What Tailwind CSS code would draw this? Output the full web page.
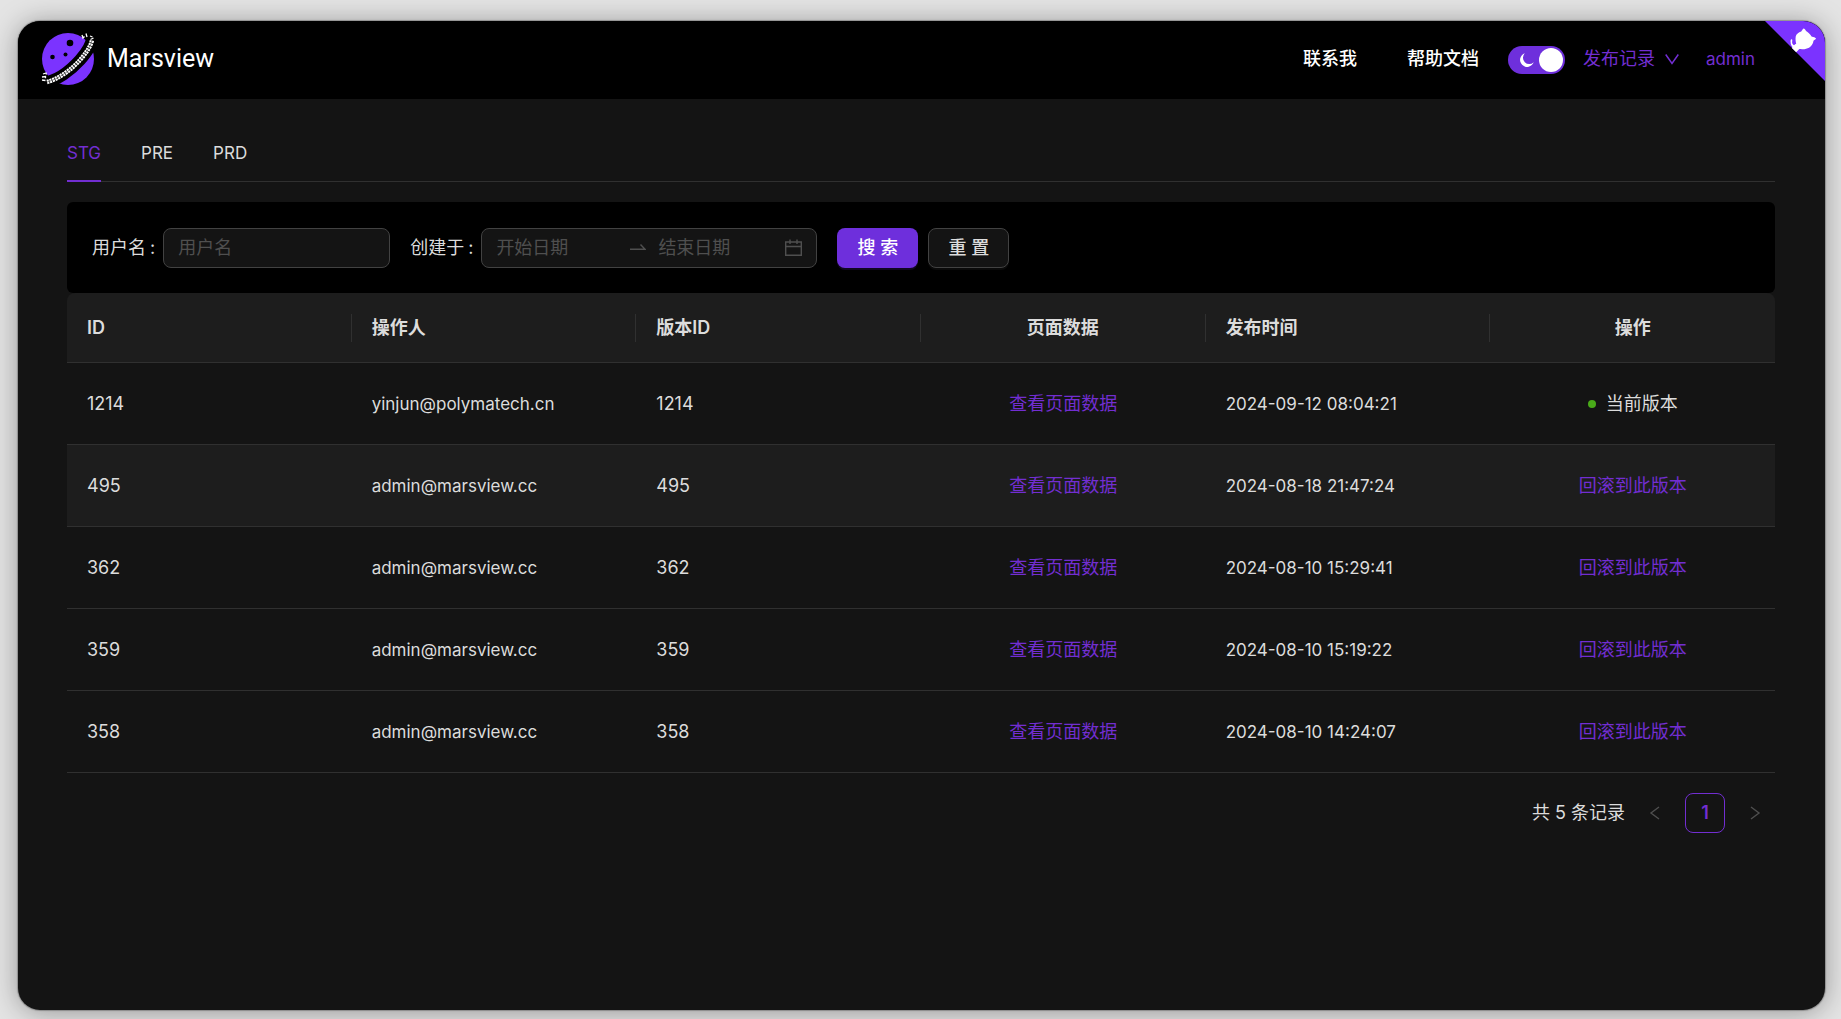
<!DOCTYPE html>
<html lang="zh-CN">
<head>
<meta charset="utf-8">
<meta name="viewport" content="width=device-width, initial-scale=1">
<title>Marsview</title>
<script src="https://cdn.jsdelivr.net/npm/@tailwindcss/browser@4"></script>
</head>
<body class="flex min-h-screen bg-[#e4e4e4] pt-[21px] pr-4 pb-[9px] pl-[18px] font-[Inter,'Noto_Sans_CJK_SC',sans-serif] text-lg leading-7 text-[#dcdcdc]">
<div class="relative flex flex-1 flex-col overflow-hidden rounded-[22px] bg-[#141414] shadow-[0_0_1px_1px_rgba(0,0,0,0.25),0_2px_28px_rgba(0,0,0,0.35)]">

  <header class="flex h-[78px] items-center justify-between bg-black pr-[70px] pb-0.5 pl-[23px]">
    <a href="#" class="flex items-center gap-3 font-[Roboto,sans-serif] text-[25px] text-white">
      <svg class="size-[54px]" viewBox="0 0 54 54" fill="none" aria-hidden="true">
        <circle cx="27" cy="27" r="26" fill="#7b33ff"/>
        <circle cx="29" cy="11" r="3.3" fill="#000"/>
        <circle cx="11.500" cy="25" r="2.300" fill="#000"/>
        <circle cx="24.500" cy="22.500" r="2" fill="#000"/>
        <path d="M2 51C16 49 30 38 39 28C46 20 51 13 51 5" stroke="#000" stroke-width="12"/>
        <path d="M6 50C18 47 31 37 39 28C45 21 50 14 51 8" stroke="#fff" stroke-width="4.400" stroke-dasharray="2.200 0.700"/>
        <path d="M6 50C18 47 31 37 39 28C45 21 50 14 51 8" stroke="#555" stroke-width="0.700"/>
        <path d="M1 48l3.500.5M1 45l3.500-.5 0 1.800M2 42l3-1 .5 1.500M41 3l1 3 1.500-1.500M45 1.500l1 3.500M49 4l2.500 1M52.500 6l-3 1.500" stroke="#fff" stroke-width="1.300"/>
      </svg>
      Marsview
    </a>
    <nav class="flex items-center text-[#722ed1]">
      <a href="#" class="mr-[50px] font-medium text-white">联系我</a>
      <a href="#" class="mr-[29px] font-medium text-white">帮助文档</a>
      <label class="relative mt-0.5 mr-[18px] block h-7 w-[57px]">
        <input type="checkbox" checked aria-label="深色模式" class="block h-7 w-[57px] appearance-none rounded-full bg-[#6e2fdc]">
        <svg class="absolute top-[7px] left-3 size-3.5" viewBox="0 0 14 14" fill="#fff" aria-hidden="true"><path d="M4.800 0.300A7 7 0 1 0 13.700 9.200A5.200 5.200 0 0 1 4.800 0.300z"/></svg>
        <span class="absolute top-[2px] right-[2px] size-6 rounded-full bg-white"></span>
      </label>
      <button type="button" class="mr-[27px] flex items-center gap-2.5">发布记录
        <svg class="size-3.5" viewBox="0 0 14 14" fill="none" stroke="currentColor" stroke-width="1.500" aria-hidden="true"><path d="M.7 2.500L7 11.500L13.300 2.500"/></svg>
      </button>
      <a href="#" class="text-[17px]">admin</a>
    </nav>
    <a href="#" aria-label="GitHub" class="absolute top-0 right-0 size-[60px]">
      <svg class="size-full" viewBox="0 0 250 250" aria-hidden="true">
        <path fill="#7b33ff" d="M0 0L250 250V0z"/>
        <path fill="#fff" d="M122 114c-16-9-15-24-15-24-1-6-1-13 3-14 6-1 3 8 3 14 1 8 6 11 9 12"/>
        <path fill="#fff" d="M112 112L130 130 143 117C160 119 180 117 191 105C197 99 201 91 202 82C207 79 213 74 213 73C211 70 202 67 194 65C191 59 187 54 183 51C179 47 175 44 171 42C168 34 163 30 161 31C157 34 153 39 151 44C140 47 130 55 128 65C126 75 128 88 130 95C124 97 119 103 112 112z"/>
      </svg>
    </a>
  </header>

  <main class="pt-10 pr-[50px] pl-[49px]">
    <div role="tablist" class="flex gap-10 border-b border-[#303030] text-[17px]">
      <button type="button" role="tab" aria-selected="true" class="-mb-px border-b-2 border-[#722ed1] pb-[13px] text-[#722ed1]">STG</button>
      <button type="button" role="tab" aria-selected="false" class="pb-[14px]">PRE</button>
      <button type="button" role="tab" aria-selected="false" class="pb-[14px]">PRD</button>
    </div>

    <form class="mt-5 flex h-[91px] items-center rounded-md bg-black px-[25px]">
      <label for="user" class="mr-2">用户名<span class="ml-1">:</span></label>
      <input id="user" type="text" placeholder="用户名" class="mr-5 h-10 w-[227px] rounded-lg border border-[#424242] bg-[#141414] px-3.5 placeholder:text-[#4f4f4f]">
      <label for="start" class="mr-2">创建于<span class="ml-1">:</span></label>
      <div class="mr-5 flex h-10 w-[336px] items-center rounded-lg border border-[#424242] bg-[#141414] px-3.5 text-[#4f4f4f]">
        <input id="start" type="text" placeholder="开始日期" class="w-[134px] placeholder:text-[#4f4f4f]">
        <svg class="mr-3 h-4 w-4" viewBox="0 0 16 16" fill="none" stroke="currentColor" stroke-width="1.400" aria-hidden="true"><path d="M0 9.300H15L10.500 4.500"/></svg>
        <input type="text" aria-label="结束日期" placeholder="结束日期" class="w-0 flex-1 placeholder:text-[#4f4f4f]">
        <svg class="h-[18px] w-[17px]" viewBox="0 0 17 18" fill="none" stroke="currentColor" stroke-width="1.400" aria-hidden="true"><path d="M.7 3H16.300V16.300H.7zM.7 7.500H16.300M5 .5V5M12 .5V5"/></svg>
      </div>
      <button type="submit" class="mr-2.5 h-10 w-[81px] rounded-lg bg-[#6e2fdc] font-medium text-white shadow-[0_2px_0_rgba(110,47,220,0.15)]">搜 索</button>
      <button type="reset" class="h-10 w-[81px] rounded-lg border border-[#424242] bg-[#141414] font-medium shadow-[0_2px_0_rgba(255,255,255,0.04)]">重 置</button>
    </form>

    <table class="w-full table-fixed border-separate border-spacing-0">
      <thead class="text-left">
        <tr class="h-[70px] [&>th]:border-b [&>th]:border-[#303030] [&>th]:bg-[#1d1d1d] [&>th]:font-semibold">
          <th class="rounded-tl-lg"><div class="border-r border-[#303030] px-5">ID</div></th>
          <th><div class="border-r border-[#303030] px-5">操作人</div></th>
          <th><div class="border-r border-[#303030] px-5">版本ID</div></th>
          <th><div class="border-r border-[#303030] px-5 text-center">页面数据</div></th>
          <th><div class="border-r border-[#303030] px-5">发布时间</div></th>
          <th class="rounded-tr-lg"><div class="px-5 text-center">操作</div></th>
        </tr>
      </thead>
      <tbody class="[&_a]:text-[#722ed1] [&_td]:h-[82px] [&_td]:border-b [&_td]:border-[#303030] [&_td]:px-5 [&_td:nth-child(2)]:text-[17px] [&_td:nth-child(5)]:text-[17px]">
        <tr><td>1214</td><td>yinjun@polymatech.cn</td><td>1214</td><td class="text-center"><a href="#">查看页面数据</a></td><td>2024-09-12 08:04:21</td><td><div class="flex items-center justify-center gap-2.5"><span class="size-2 rounded-full bg-[#49aa19]"></span>当前版本</div></td></tr>
        <tr class="bg-[#1d1d1d]"><td>495</td><td>admin@marsview.cc</td><td>495</td><td class="text-center"><a href="#">查看页面数据</a></td><td>2024-08-18 21:47:24</td><td class="text-center"><a href="#">回滚到此版本</a></td></tr>
        <tr><td>362</td><td>admin@marsview.cc</td><td>362</td><td class="text-center"><a href="#">查看页面数据</a></td><td>2024-08-10 15:29:41</td><td class="text-center"><a href="#">回滚到此版本</a></td></tr>
        <tr><td>359</td><td>admin@marsview.cc</td><td>359</td><td class="text-center"><a href="#">查看页面数据</a></td><td>2024-08-10 15:19:22</td><td class="text-center"><a href="#">回滚到此版本</a></td></tr>
        <tr><td>358</td><td>admin@marsview.cc</td><td>358</td><td class="text-center"><a href="#">查看页面数据</a></td><td>2024-08-10 14:24:07</td><td class="text-center"><a href="#">回滚到此版本</a></td></tr>
      </tbody>
    </table>

    <nav aria-label="分页" class="mt-5 flex items-center justify-end gap-2.5">
      <span>共 5 条记录</span>
      <button type="button" disabled aria-label="上一页" class="flex size-10 items-center justify-center text-[#4f4f4f]"><svg class="size-3.5" viewBox="0 0 14 14" fill="none" stroke="currentColor" stroke-width="1.400" aria-hidden="true"><path d="M11 1L3 7L11 13"/></svg></button>
      <button type="button" aria-current="page" class="size-10 rounded-lg border border-[#722ed1] font-semibold text-[#722ed1]">1</button>
      <button type="button" disabled aria-label="下一页" class="flex size-10 items-center justify-center text-[#4f4f4f]"><svg class="size-3.5" viewBox="0 0 14 14" fill="none" stroke="currentColor" stroke-width="1.400" aria-hidden="true"><path d="M3 1L11 7L3 13"/></svg></button>
    </nav>
  </main>
</div>
</body>
</html>
